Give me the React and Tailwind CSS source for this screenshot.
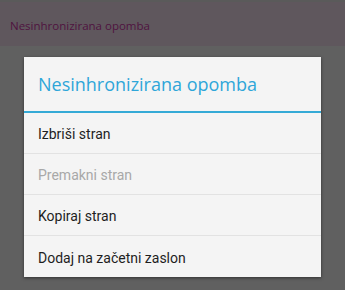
import React from "react";

const items = [
  { label: "Izbriši stran", disabled: false },
  { label: "Premakni stran", disabled: true },
  { label: "Kopiraj stran", disabled: false },
  { label: "Dodaj na začetni zaslon", disabled: false },
];

export default function App() {
  return (
    <div className="w-[345px] h-[290px] bg-[#606060] overflow-hidden flex flex-col">
      {/* dimmed app bar */}
      <div className="h-[46px] bg-[#5f575d] flex items-center pl-[10px] pt-[4px] border-t-2 border-[#5a5a5a]">
        <span className="text-[11.5px] text-[#4f1340] font-['Open_Sans',sans-serif]">
          Nesinhronizirana opomba
        </span>
      </div>

      {/* dialog */}
      <div className="mt-[11px] mx-[24px] bg-[#f4f4f4] shadow-[0_1px_3px_rgba(0,0,0,0.5)]">
        <div className="h-[56px] flex items-center pl-[14px] border-b-2 border-[#35aad6]">
          <span className="text-[18px] text-[#2ea6d9] font-['Open_Sans',sans-serif]">
            Nesinhronizirana opomba
          </span>
        </div>
        <ul className="font-['Roboto',sans-serif] text-[14px]">
          {items.map((item, i) => (
            <li
              key={item.label}
              className={
                "h-[41px] flex items-center pl-[14px] pt-[3px] " +
                (i < items.length - 1 ? "border-b border-[#e2e2e2] " : "") +
                (item.disabled ? "text-[#a8a8a8]" : "text-[#1e1e1e]")
              }
            >
              {item.label}
            </li>
          ))}
        </ul>
      </div>
    </div>
  );
}
